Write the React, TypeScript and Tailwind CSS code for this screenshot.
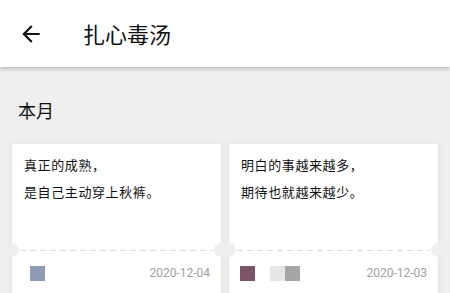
import { MdArrowBack } from "react-icons/md";

type Thumb = { color: string; offset: string };

type Quote = {
  lines: string[];
  date: string;
  thumbs: Thumb[];
};

const quotes: Quote[] = [
  {
    lines: ["真正的成熟，", "是自己主动穿上秋裤。"],
    date: "2020-12-04",
    thumbs: [{ color: "bg-[#8e9bb5]", offset: "ml-[18px]" }],
  },
  {
    lines: ["明白的事越来越多，", "期待也就越来越少。"],
    date: "2020-12-03",
    thumbs: [
      { color: "bg-[#7d5466]", offset: "ml-[11px]" },
      { color: "bg-[#e6e6e6]", offset: "ml-[15px]" },
      { color: "bg-[#a6a6a6]", offset: "ml-0" },
    ],
  },
];

function TicketCard({ q }: { q: Quote }) {
  return (
    <div className="relative bg-white h-[160px] shadow-[0_0_6px_rgba(0,0,0,0.07)]">
      <div className="h-[106px] pt-[7px] px-[12px] text-[13px] leading-[27px] tracking-[0.6px] text-[#111]">
        {q.lines.map((l, i) => (
          <p key={i}>{l}</p>
        ))}
      </div>
      {/* 切り取り線 */}
      <div className="relative">
        <div className="mx-[8px] h-px bg-[repeating-linear-gradient(90deg,#dcdcdc_0_6px,transparent_6px_10px)]" />
        <div className="absolute -left-[7px] -top-[7px] w-[14px] h-[14px] rounded-full bg-[#efefef]" />
        <div className="absolute -right-[7px] -top-[7px] w-[14px] h-[14px] rounded-full bg-[#efefef]" />
      </div>
      <div className="flex items-center justify-between pr-[11px] pt-[13px]">
        <div className="flex">
          {q.thumbs.map((t, i) => (
            <div key={i} className={`w-[15px] h-[15px] ${t.color} ${t.offset}`} />
          ))}
        </div>
        <span className="text-[12px] text-[#a0a0a0] font-['Roboto',sans-serif]">{q.date}</span>
      </div>
    </div>
  );
}

export default function App() {
  return (
    <div className="h-[293px] overflow-hidden bg-[#efefef] font-['Noto_Sans_CJK_SC','Noto_Sans',sans-serif]">
      <header className="relative z-10 h-[67px] bg-white flex items-center shadow-[0_2px_4px_rgba(0,0,0,0.22)]">
        <MdArrowBack size={26} className="ml-[18px] text-[#111]" />
        <h1 className="ml-[39px] text-[22px] text-[#111]">扎心毒汤</h1>
      </header>

      <div className="px-[12px]">
        <h2 className="pt-[30px] pl-[6px] text-[18px] leading-[26px] text-[#111]">本月</h2>
        <div className="mt-[21px] grid grid-cols-2 gap-[8px]">
          {quotes.map((q) => (
            <TicketCard key={q.date} q={q} />
          ))}
        </div>
      </div>
    </div>
  );
}
